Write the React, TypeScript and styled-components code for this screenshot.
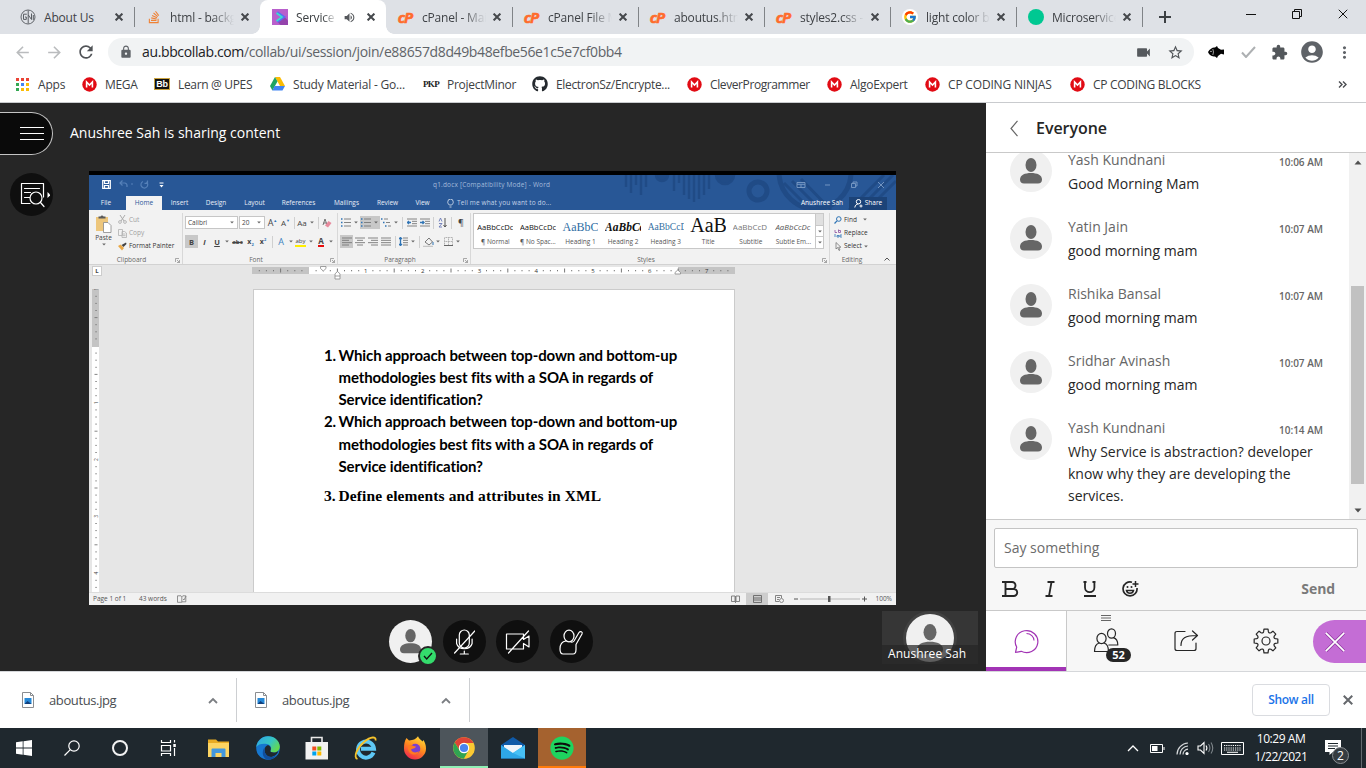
import React from "react";
import styled, { createGlobalStyle, css } from "styled-components";
import { FaGithub, FaSpotify, FaStackOverflow } from "react-icons/fa";
import { FcGoogle } from "react-icons/fc";
import {
  MdAccountCircle,
  MdArrowBack,
  MdArrowForward,
  MdExtension,
  MdLock,
  MdMoreVert,
  MdRefresh,
  MdStarBorder,
  MdVideocam,
  MdVolumeUp,
} from "react-icons/md";

const uiFont = `"Open Sans", "Noto Sans", sans-serif`;

const GlobalStyle = createGlobalStyle`
  * { box-sizing: border-box; }
  html, body { margin: 0; padding: 0; overflow: hidden; }
  body { font-family: ${uiFont}; background: #fff; }
  svg { display: block; flex: none; }
`;

const Screen = styled.div`
  width: 1366px;
  height: 768px;
  display: flex;
  flex-direction: column;
  overflow: hidden;
`;

type SvgProps = { w: number; h: number; vb?: string; children: React.ReactNode };
const Svg = ({ w, h, vb, children }: SvgProps) => (
  <svg width={w} height={h} viewBox={vb ?? `0 0 ${w} ${h}`} fill="none">
    {children}
  </svg>
);

/* ---------- Browser tabs ---------- */

const TabStrip = styled.div`
  height: 34px;
  flex: none;
  background: #dee1e6;
  display: flex;
  padding-left: 8px;
`;

const Tab = styled.div<{ $active?: boolean; $divider?: boolean }>`
  position: relative;
  width: 126px;
  height: 34px;
  padding: 0 7px 0 12px;
  display: flex;
  align-items: center;
  background: ${(p) => (p.$active ? "#fff" : "transparent")};
  border-radius: ${(p) => (p.$active ? "8px 8px 0 0" : "0")};
  ${(p) =>
    p.$active &&
    css`
      &::before,
      &::after {
        content: "";
        position: absolute;
        bottom: 0;
        width: 8px;
        height: 8px;
      }
      &::before {
        left: -8px;
        background: radial-gradient(circle at 0 0, transparent 7.5px, #fff 8px);
      }
      &::after {
        right: -8px;
        background: radial-gradient(circle at 100% 0, transparent 7.5px, #fff 8px);
      }
    `}
  ${(p) =>
    p.$divider &&
    css`
      &::after {
        content: "";
        position: absolute;
        right: -1px;
        top: 7px;
        width: 1px;
        height: 20px;
        background: #808387;
      }
    `}
`;

const Favicon = styled.span`
  width: 16px;
  height: 16px;
  margin-right: 8px;
  flex: none;
  display: flex;
  align-items: center;
  justify-content: center;
`;

const TabTitle = styled.span<{ $w: number; $fade: boolean; $active?: boolean }>`
  width: ${(p) => p.$w}px;
  flex: none;
  overflow: hidden;
  white-space: nowrap;
  font-size: 12px;
  letter-spacing: -0.2px;
  color: ${(p) => (p.$active ? "#3c4043" : "#3f4246")};
  ${(p) => p.$fade && "mask-image: linear-gradient(90deg, #000 65%, transparent);"}
`;

const AudioMark = styled.span`
  margin-left: 6px;
`;

const TabClose = styled.span`
  margin-left: auto;
  width: 12px;
`;

const NewTab = styled.div`
  width: 46px;
  display: flex;
  align-items: center;
  justify-content: center;
`;

const WindowButtons = styled.div`
  margin-left: auto;
  display: flex;
  height: 28px;
  align-items: center;
`;

const WindowButton = styled.span`
  width: 46px;
  display: flex;
  justify-content: center;
`;

const CloseX = ({ size = 8, color = "#45484c", sw = 2 }) => (
  <Svg w={size} h={size} vb="0 0 8 8">
    <path d="M.6.6l6.8 6.8M7.4.6L.6 7.4" stroke={color} strokeWidth={(sw * 8) / size} />
  </Svg>
);

const GmIcon = () => (
  <Svg w={16} h={16}>
    <circle cx="8" cy="8" r="7" stroke="#63676c" strokeWidth="1" />
    <path d="M6.800 5.200H3.500v5.200h2.800V8H5M8.200 1.500v13M8.300 6l3.200 4.500V4.500M13.300 6v5" stroke="#5a5e63" strokeWidth="1" />
  </Svg>
);

const CollabIcon = () => (
  <Svg w={16} h={16}>
    <rect width="16" height="16" fill="#b85fcc" />
    <path d="M6 13.500L12.500 8 16 11.500V16H8.500z" fill="#9443ac" />
    <path d="M5 3.500L11.500 8 5 12.500" stroke="#5a6ff0" strokeWidth="3" />
    <path d="M4.500 4L10 8l-5.500 4" stroke="#3be0cf" strokeWidth="1.600" />
  </Svg>
);

const CpMark = styled.span`
  font: italic 700 15px/16px "Noto Sans", "Liberation Sans", sans-serif;
  letter-spacing: -1px;
  color: #ff6c2c;
  -webkit-text-stroke: 0.6px #ff6c2c;
  padding: 0 2px 1px 0;
`;

const CpanelIcon = () => <CpMark>cP</CpMark>;
const TealDot = () => (
  <Svg w={16} h={16}>
    <circle cx="8" cy="8" r="8" fill="#00c892" />
  </Svg>
);
const GoogleIcon = () => (
  <Svg w={16} h={16}>
    <circle cx="8" cy="8" r="8" fill="#fff" />
    <FcGoogle size={14} x={1} y={1} />
  </Svg>
);

const tabs = [
  { title: "About Us", icon: <GmIcon />, divider: true },
  { title: "html - backgr", icon: <FaStackOverflow size={14} color="#ef8236" />, fade: true },
  { title: "Service", icon: <CollabIcon />, active: true, audio: true, fade: true },
  { title: "cPanel - Main", icon: <CpanelIcon />, divider: true, fade: true },
  { title: "cPanel File M", icon: <CpanelIcon />, divider: true, fade: true },
  { title: "aboutus.html", icon: <CpanelIcon />, divider: true, fade: true },
  { title: "styles2.css -", icon: <CpanelIcon />, divider: true, fade: true },
  { title: "light color ba", icon: <GoogleIcon />, divider: true, fade: true },
  { title: "Microservice", icon: <TealDot />, divider: true, fade: true },
];

const BrowserTabs = () => (
  <TabStrip>
    {tabs.map((t, i) => (
      <Tab key={i} $active={t.active} $divider={t.divider}>
        <Favicon>{t.icon}</Favicon>
        <TabTitle $w={t.audio ? 41 : 64} $fade={!!t.fade} $active={t.active}>
          {t.title}
        </TabTitle>
        {t.audio && (
          <AudioMark>
            <MdVolumeUp size={13} color="#55585c" />
          </AudioMark>
        )}
        <TabClose>
          <CloseX />
        </TabClose>
      </Tab>
    ))}
    <NewTab>
      <Svg w={12} h={12}>
        <path d="M6 0v12M0 6h12" stroke="#3c4043" strokeWidth="2" />
      </Svg>
    </NewTab>
    <WindowButtons>
      <WindowButton>
        <Svg w={10} h={10}>
          <path d="M0 5.500h10" stroke="#111" />
        </Svg>
      </WindowButton>
      <WindowButton>
        <Svg w={10} h={10}>
          <path d="M.5 2.500h7v7h-7zM2.500 2.500v-2h7v7h-2" stroke="#111" />
        </Svg>
      </WindowButton>
      <WindowButton>
        <CloseX size={10} color="#111" sw={1} />
      </WindowButton>
    </WindowButtons>
  </TabStrip>
);

/* ---------- Address bar ---------- */

const Toolbar = styled.div`
  height: 34px;
  flex: none;
  display: flex;
  align-items: center;
  padding: 2px 0 0 6px;
`;

const NavButton = styled.span<{ $w?: number }>`
  width: ${(p) => p.$w ?? 32}px;
  display: flex;
  justify-content: center;
  flex: none;
`;

const Omnibox = styled.div`
  width: 1086px;
  height: 28px;
  margin-left: 6px;
  border-radius: 14px;
  background: #f1f3f4;
  display: flex;
  align-items: center;
  padding: 0 10px 0 11px;
`;

const Url = styled.span`
  margin: -2px auto 0 9px;
  font-size: 14px;
  letter-spacing: -0.37px;
  color: #5f6368;
  b {
    font-weight: 400;
    color: #202124;
  }
`;

const StarSlot = styled.span`
  margin-left: 15px;
`;

const AddressBar = () => (
  <Toolbar>
    <NavButton>
      <MdArrowBack size={19} color="#babcbe" />
    </NavButton>
    <NavButton>
      <MdArrowForward size={19} color="#babcbe" />
    </NavButton>
    <NavButton>
      <MdRefresh size={20} color="#505357" />
    </NavButton>
    <Omnibox>
      <MdLock size={14} color="#5f6368" />
      <Url>
        <b>au.bbcollab.com</b>/collab/ui/session/join/e88657d8d49b48efbe56e1c5e7cf0bb4
      </Url>
      <MdVideocam size={17} color="#55595d" />
      <StarSlot>
        <MdStarBorder size={17} color="#505458" />
      </StarSlot>
    </Omnibox>
    <NavButton $w={44}>
      <Svg w={16} h={12}>
        <path d="M0 6C2 2.500 5 1 7 1.500L9 0l1 2 3 1.800L16 3.500v5l-3-.8L10 10l-1 2-2-1.500C4 10.500 1.500 9.500 0 6z" fill="#050505" />
        <path d="M4.800 3q1.400 3 0 6" stroke="#ddd" strokeWidth=".7" />
        <circle cx="3" cy="5.400" r=".6" fill="#fff" />
      </Svg>
    </NavButton>
    <NavButton $w={20}>
      <Svg w={15} h={12}>
        <path d="M1 6.500L5 11 14 1" stroke="#adb0b2" strokeWidth="2" />
      </Svg>
    </NavButton>
    <NavButton $w={43}>
      <MdExtension size={17} color="#53575b" />
    </NavButton>
    <NavButton $w={21}>
      <MdAccountCircle size={26} color="#5f6368" />
    </NavButton>
    <NavButton $w={44}>
      <MdMoreVert size={19} color="#5f6368" />
    </NavButton>
  </Toolbar>
);

/* ---------- Bookmarks ---------- */

const BookmarkBar = styled.div`
  height: 35px;
  flex: none;
  display: flex;
  align-items: center;
  padding: 0 19px 2px 14px;
  border-bottom: 1px solid #c9cbce;
`;

const Bookmark = styled.span<{ $w: number; $ls?: number }>`
  width: ${(p) => p.$w}px;
  flex: none;
  display: flex;
  align-items: center;
  white-space: nowrap;
  font-size: 12px;
  line-height: 15px;
  letter-spacing: ${(p) => p.$ls ?? -0.2}px;
  color: #3c4043;
`;

const Overflow = styled.span`
  margin-left: auto;
`;

const PkpText = styled.span`
  font: 700 9px "Liberation Serif", serif;
  letter-spacing: -0.6px;
  color: #222;
`;

const BbTile = styled.span`
  width: 16px;
  height: 12px;
  background: #111;
  border: 1px solid #c9a23e;
  color: #fff;
  font: 700 9px/10px "Liberation Sans", sans-serif;
  letter-spacing: -0.3px;
  display: flex;
  justify-content: center;
`;

const MegaIcon = () => (
  <Svg w={15} h={15}>
    <circle cx="7.500" cy="7.500" r="7.200" fill="#e10b14" />
    <path d="M4.600 10.600V5l2.900 3 2.900-3v5.600" stroke="#fff" strokeWidth="1.600" />
  </Svg>
);

const AppsIcon = () => {
  const colors = ["#ea4335", "#ea4335", "#ea4335", "#34a853", "#4285f4", "#fbbc05", "#34a853", "#fbbc05", "#fbbc05"];
  return (
    <Svg w={13} h={13}>
      {colors.map((c, i) => (
        <rect key={i} x={(i % 3) * 5} y={Math.floor(i / 3) * 5} width="3" height="3" fill={c} />
      ))}
    </Svg>
  );
};

const DriveIcon = () => (
  <Svg w={15} h={14}>
    <path d="M5 0h5l5 9h-5z" fill="#fbbc05" />
    <path d="M5 0l2.500 4.400L2.400 13.500 0 9z" fill="#1fa463" />
    <path d="M4.600 9H15l-2.500 4.500H2.300z" fill="#4285f4" />
  </Svg>
);

const bookmarks = [
  { label: "Apps", icon: <AppsIcon />, w: 67 },
  { label: "MEGA", icon: <MegaIcon />, w: 73, ls: -0.35 },
  { label: "Learn @ UPES", icon: <BbTile>Bb</BbTile>, w: 115, ls: -0.33 },
  { label: "Study Material - Go...", icon: <DriveIcon />, w: 154 },
  { label: "ProjectMinor", icon: <PkpText>PKP</PkpText>, w: 109, ls: -0.27 },
  { label: "ElectronSz/Encrypte...", icon: <FaGithub size={16} color="#24292e" />, w: 154, ls: -0.33 },
  { label: "CleverProgrammer", icon: <MegaIcon />, w: 140, ls: -0.4 },
  { label: "AlgoExpert", icon: <MegaIcon />, w: 98, ls: -0.3 },
  { label: "CP CODING NINJAS", icon: <MegaIcon />, w: 145, ls: -0.18 },
  { label: "CP CODING BLOCKS", icon: <MegaIcon />, w: 140, ls: -0.3 },
];

const Bookmarks = () => (
  <BookmarkBar>
    {bookmarks.map((b) => (
      <Bookmark key={b.label} $w={b.w} $ls={b.ls}>
        <Favicon>{b.icon}</Favicon>
        {b.label}
      </Bookmark>
    ))}
    <Overflow>
      <Svg w={9} h={7}>
        <path d="M1 .5l3 3-3 3M5 .5l3 3-3 3" stroke="#4a4d51" strokeWidth="1.400" />
      </Svg>
    </Overflow>
  </BookmarkBar>
);

/* ---------- Session stage ---------- */

const Session = styled.div`
  height: 569px;
  flex: none;
  display: flex;
  border-bottom: 1px solid #d5d7da;
`;

const Stage = styled.div`
  width: 986px;
  background: #262626;
  display: grid;
  grid-template: 68px 434px 66px / 89px 807px 90px;
`;

const StageHeader = styled.div`
  grid-column: 1 / -1;
  display: flex;
  align-items: flex-start;
  color: #fff;
  font-size: 14px;
  line-height: 20px;
`;

const MenuPill = styled.div`
  width: 53px;
  height: 43px;
  margin: 9px 17px 0 0;
  padding: 0 8px 1px 0;
  background: #0a0a0a;
  border: 1px solid #c4c4c4;
  border-left: 0;
  border-radius: 0 22px 22px 0;
  display: flex;
  align-items: center;
  justify-content: flex-end;
`;

const StageTitle = styled.span`
  margin-top: 20px;
`;

const SideTools = styled.div`
  padding: 2px 0 0 10px;
`;

const RoundButton = styled.div<{ $light?: boolean }>`
  position: relative;
  width: 43px;
  height: 43px;
  border-radius: 50%;
  background: ${(p) => (p.$light ? "#f0f0f0" : "#0f0f0f")};
  display: flex;
  align-items: center;
  justify-content: center;
`;

const StageControls = styled.div`
  grid-column: 1 / -1;
  display: flex;
  padding: 6px 8px 0 389px;
`;

const ControlGroup = styled.div`
  display: flex;
  gap: 10.6px;
  padding-top: 9px;
`;

const StatusBadge = styled.span`
  position: absolute;
  right: -6px;
  bottom: -3px;
  width: 20px;
  height: 20px;
  border-radius: 50%;
  border: 2px solid #262626;
  background: #34db6c;
  display: flex;
  align-items: center;
  justify-content: center;
`;

const PresenterTile = styled.div`
  position: relative;
  width: 96px;
  height: 53px;
  margin-left: auto;
  background: #363636;
  display: flex;
  justify-content: center;
  padding-top: 3px;
`;

const PresenterAvatar = styled.div`
  width: 48px;
  height: 48px;
  border-radius: 50%;
  overflow: hidden;
  background: #f0f0f0;
  box-shadow: 0 0 0 3px #414141;
  clip-path: inset(-3px -3px 0 -3px);
  display: flex;
  justify-content: center;
  padding-top: 10px;
`;

const PresenterName = styled.div`
  position: absolute;
  inset: auto 0 0 0;
  height: 19px;
  padding-left: 6px;
  background: rgba(38, 38, 38, 0.72);
  color: #fff;
  font-size: 12px;
  letter-spacing: 0.05px;
  line-height: 18px;
  white-space: nowrap;
`;

const Person = ({ w = 22 }: { w?: number }) => (
  <Svg w={w} h={(w * 26) / 22} vb="0 0 22 26">
    <ellipse cx="11" cy="7" rx="5.500" ry="7" fill="#666" />
    <path d="M0 21.500C0 17 5 15 11 15s11 2 11 6.500c0 2.500-1.500 4-4 4H4c-2.500 0-4-1.500-4-4z" fill="#666" />
  </Svg>
);

const line = { stroke: "#fff", strokeWidth: 1.2, strokeLinecap: "round", strokeLinejoin: "round" } as const;

const MicOff = () => (
  <Svg w={22} h={26} vb="-.800 0 22 26">
    <rect x="5.500" y="1" width="10" height="18" rx="5" {...line} />
    <path d="M2.800 10v4.500a8 7 0 0 0 15.500 0V10M10.500 22v3M6.500 25h8M.8 24L21 2" {...line} />
  </Svg>
);

const CameraOff = () => (
  <Svg w={26} h={26} vb="-.500 0 26 26">
    <path d="M1 5h17v5.500l5.500-3.500v11L18 14.500V20H1zM3 24L23 2" {...line} />
  </Svg>
);

const RaiseHand = () => (
  <Svg w={26} h={26}>
    <ellipse cx="11" cy="7" rx="5" ry="5.800" {...line} />
    <path d="M8 12c-4 .5-6 4-6 8 0 3 1 5 3 5h10c2 0 3-1.500 3-4.500v-5l6-10.500c1-2-1.600-3.500-3-1.500L16 12c-.8 1-2 1.200-3 1" {...line} />
  </Svg>
);

/* ---------- Shared Word window ---------- */

const WordWindow = styled.div`
  border-top: 4px solid #000;
  background: #e6e6e6;
  display: flex;
  flex-direction: column;
  font-family: "Open Sans", "Noto Sans", sans-serif;
  font-size: 6.5px;
  line-height: 8px;
  color: #444;
  overflow: hidden;
  white-space: nowrap;
`;

const WordTop = styled.div`
  position: relative;
  height: 35px;
  flex: none;
  background: #285796;
  color: #e8eef6;
`;

const TopPattern = styled.div`
  position: absolute;
  right: 0;
  top: 0;
`;

const WordTitleRow = styled.div`
  position: relative;
  height: 21px;
  display: flex;
  align-items: center;
  padding: 0 0 2px 10px;
`;

const WordTabsRow = styled.div`
  position: relative;
  height: 14px;
  display: flex;
  align-items: center;
`;

const WordTab = styled.span<{ $w: number; $active?: boolean }>`
  width: ${(p) => p.$w}px;
  height: 14px;
  line-height: 14px;
  flex: none;
  text-align: center;
  ${(p) => p.$active && "background: #f3f3f3; color: #2b579a; font-weight: 500;"}
  &:first-of-type {
    padding-right: 3px;
  }
`;

const DocTitle = styled.span`
  width: 118px;
  margin-left: 269px;
  color: #a3bbdb;
  letter-spacing: 0.18px;
`;

const TellMe = styled.span`
  letter-spacing: 0.12px;
  color: #c3d2e8;
`;

const Gap = styled.span<{ $w: number }>`
  width: ${(p) => p.$w}px;
  flex: none;
`;

const Slot = styled.span<{ $w: number; $on?: boolean }>`
  width: ${(p) => p.$w}px;
  height: 13px;
  flex: none;
  display: inline-flex;
  align-items: center;
  justify-content: center;
  background: ${(p) => (p.$on ? "#c8c8c8" : "transparent")};
`;

const ShareButton = styled.span`
  width: 38px;
  height: 13px;
  margin-left: 4px;
  background: #1c4378;
  color: #fff;
  display: flex;
  align-items: center;
  justify-content: center;
  gap: 2px;
`;

const PresenterLabel = styled.span`
  width: 44px;
  margin-left: auto;
  color: #fff;
`;

const TopRightPad = styled.span`
  width: 9px;
`;

const Ribbon = styled.div`
  height: 55px;
  flex: none;
  background: #f2f2f2;
  border-bottom: 1px solid #d2d2d2;
  display: flex;
`;

const Group = styled.div<{ $w: number; $last?: boolean }>`
  position: relative;
  width: ${(p) => p.$w}px;
  height: 51px;
  margin-top: 3px;
  padding-left: ${(p) => (p.$last ? 4 : 2)}px;
  flex: none;
  display: flex;
  flex-direction: column;
  border-right: ${(p) => (p.$last ? "0" : "1px solid #d8d8d8")};
`;

const GroupLabel = styled.div`
  margin-top: auto;
  height: 8px;
  display: flex;
  justify-content: center;
  color: #666;
  padding-right: 10px;
`;

const Launcher = styled.span`
  position: absolute;
  right: 2px;
  bottom: 1px;
`;

const RibbonRow = styled.div`
  display: flex;
  align-items: center;
  height: 19px;
`;

const Combo = styled.span<{ $w: number }>`
  width: ${(p) => p.$w}px;
  height: 13px;
  margin-right: 1px;
  padding: 0 3px 0 2px;
  background: #fff;
  border: 1px solid #c6c6c6;
  display: flex;
  align-items: center;
  justify-content: space-between;
`;

const Divider = styled.span<{ $w: number }>`
  width: ${(p) => p.$w}px;
  display: flex;
  justify-content: center;
  &::before {
    content: "";
    width: 1px;
    height: 12px;
    background: #d0d0d0;
  }
`;

const ClipboardBody = styled.div`
  display: flex;
`;

const PasteButton = styled.div`
  width: 25px;
  display: flex;
  flex-direction: column;
  align-items: center;
  gap: 1px;
  padding-top: 2px;
`;

const ClipboardList = styled.div`
  padding: 0 0 0 2px;
  display: flex;
  flex-direction: column;
`;

const MiniCommand = styled.span<{ $dim?: boolean }>`
  height: 13.6px;
  margin-top: -0.2px;
  display: flex;
  align-items: center;
  gap: 2px;
  color: ${(p) => (p.$dim ? "#a0a0a0" : "#333")};
`;

const Gallery = styled.div`
  width: 351px;
  height: 36px;
  background: #fff;
  border: 1px solid #c8c8c8;
  display: flex;
`;

const StyleCard = styled.div`
  width: 42.6px;
  padding: 0 2px;
  display: flex;
  flex-direction: column;
  align-items: center;
  color: #555;
`;

const StyleSample = styled.span<{ $size: number; $color: string; $serif?: boolean; $bold?: boolean; $italic?: boolean }>`
  height: 24px;
  width: 36px;
  overflow: hidden;
  line-height: ${(p) => (p.$size > 15 ? 23 : 26)}px;
  text-align: left;
  font-size: ${(p) => p.$size}px;
  color: ${(p) => p.$color};
  font-family: ${(p) => (p.$serif ? `"Liberation Serif", serif` : `"Open Sans", sans-serif`)};
  font-weight: ${(p) => (p.$bold ? 700 : 400)};
  font-style: ${(p) => (p.$italic ? "italic" : "normal")};
`;

const GalleryScroll = styled.div`
  margin-left: auto;
  width: 8px;
  border-left: 1px solid #c8c8c8;
  display: flex;
  flex-direction: column;
  & > span {
    flex: 1;
    display: flex;
    align-items: center;
    justify-content: center;
    border-bottom: 1px solid #c8c8c8;
  }
  & > span:first-child {
    background: #e0e0e0;
  }
  & > span:last-child {
    border-bottom: 0;
  }
`;

const CollapseSlot = styled.span`
  margin: auto 6px 3px auto;
`;

const RulerRow = styled.div`
  height: 24px;
  flex: none;
  display: flex;
  padding: 1px 0 0 3px;
`;

const DocArea = styled.div`
  height: 303px;
  flex: none;
  display: flex;
  padding-left: 3px;
`;

const Page = styled.div`
  width: 482px;
  margin-left: 154px;
  padding: 54px 40px 0 70px;
  background: #fff;
  border: 1px solid #cbcbcb;
  border-bottom: 0;
`;

const Question = styled.div<{ $serif?: boolean }>`
  display: flex;
  margin-top: ${(p) => (p.$serif ? 8 : 0)}px;
  font-family: ${(p) => (p.$serif ? `"Liberation Serif", serif` : `Lato, sans-serif`)};
  font-size: ${(p) => (p.$serif ? 15.5 : 15)}px;
  font-weight: 700;
  line-height: 22.15px;
  color: #000;
  letter-spacing: ${(p) => (p.$serif ? 0.11 : -0.13)}px;
`;

const QuestionNumber = styled.span`
  width: 14.5px;
  flex: none;
`;

const StatusBar = styled.div`
  height: 13px;
  flex: none;
  background: #f1f1f1;
  border-top: 1px solid #dcdcdc;
  display: flex;
  align-items: center;
  padding-left: 4px;
  color: #555;
`;

const Caret = () => (
  <Svg w={4} h={3}>
    <path d="M.2.500h3.600L2 2.500z" fill="#666" />
  </Svg>
);

const LauncherIcon = () => (
  <Svg w={5} h={5}>
    <path d="M.5 4V.5H4M2 2l2.500 2.500M4.500 2v2.500H2" stroke="#888" strokeWidth=".7" />
  </Svg>
);

const WordPattern = () => (
  <Svg w={272} h={35}>
    <g stroke="#204b86" strokeWidth="2.500">
      <path d="M2 0v12M7 0v18M12 0v10M17 0v20M22 0v12M50 0v16M55 0v8M60 0v20M65 0v24M70 0v27M75 0v24M80 0v20M85 0v14" />
      <path d="M160 8l27 27M168 6l29 29M177 4l30 31" strokeWidth="3" />
      <path d="M225 35L260 0M234 35L269 0M243 35l29-29" strokeWidth="3" />
      <circle cx="134" cy="16" r="9" strokeWidth="5" />
      <path d="M155 0c2 20 18 34 36 34s34-14 36-34" strokeWidth="5" />
      <path d="M32 0a6 6 0 0 0 12 0" fill="#204b86" />
      <path d="M92 0a9 9 0 0 0 18 0" fill="#204b86" />
    </g>
  </Svg>
);

const Lines = ({ rows, marks }: { rows: number[][]; marks?: string }) => (
  <Svg w={10} h={9}>
    {rows.map(([a, b], i) => (
      <path key={i} d={`M${a} ${1 + (i * 7) / (rows.length - 1)}H${b}`} stroke="#777" strokeWidth=".9" />
    ))}
    {marks && <path d={marks} stroke="#2f74b5" strokeWidth="1.300" />}
  </Svg>
);

const bulletMarks = "M0 1h1.500M0 4.500h1.500M0 8h1.500";
const full = [[0, 10], [0, 7], [0, 10], [0, 7]];

const styleCards = [
  { sample: "AaBbCcDc", label: "¶ Normal", size: 7.6, color: "#111" },
  { sample: "AaBbCcDc", label: "¶ No Spac...", size: 7.6, color: "#111" },
  { sample: "AaBbC", label: "Heading 1", size: 12, color: "#2e6da4", serif: true },
  { sample: "AaBbCc", label: "Heading 2", size: 11.5, color: "#111", bold: true, italic: true, serif: true },
  { sample: "AaBbCcD", label: "Heading 3", size: 9.5, color: "#336f9f", serif: true },
  { sample: "AaB", label: "Title", size: 20, color: "#111", serif: true },
  { sample: "AaBbCcD", label: "Subtitle", size: 8, color: "#777" },
  { sample: "AaBbCcDc", label: "Subtle Em...", size: 7.8, color: "#555", italic: true },
];

const wordTabs: [string, number, boolean?][] = [
  ["File", 37],
  ["Home", 36, true],
  ["Insert", 35],
  ["Design", 38],
  ["Layout", 39],
  ["References", 49],
  ["Mailings", 47],
  ["Review", 35],
  ["View", 35],
];

const WordHeader = () => (
  <WordTop>
    <TopPattern>
      <WordPattern />
    </TopPattern>
    <WordTitleRow>
      <Gap $w={3} />
      <Svg w={9} h={9}>
        <path d="M.7.700h7.600v7.600H.7zM2.500.7v2.800h4V.7M2.500 8V5.500h4V8" stroke="#fff" strokeWidth="1.200" />
      </Svg>
      <Gap $w={8} />
      <Svg w={32} h={9}>
        <path
          d="M1 3h5q2.500.5 2 4M3.500.5L1 3l2.500 2.500M12 4h2M24 1.500a3.400 3.400 0 1 0 3.500.5M28.500.5v2.800h-3"
          stroke="#5580b8"
          strokeWidth="1.200"
        />
      </Svg>
      <Gap $w={8} />
      <Svg w={5} h={6}>
        <path d="M.5 1h4" stroke="#fff" />
        <path d="M.5 3h4L2.500 5.500z" fill="#fff" />
      </Svg>
      <DocTitle>q1.docx [Compatibility Mode] - Word</DocTitle>
      <Gap $w={245} />
      <Svg w={96} h={8}>
        <path
          d="M1 1.500h8v5H1zM1 3.300h8M5 3.500v3M29 4h5M55.500 2.500h4v4h-4zM57 2.500V1h4v4h-1.500M82 1l6 6M88 1l-6 6"
          stroke="#7c9cc6"
          strokeWidth=".9"
        />
      </Svg>
    </WordTitleRow>
    <WordTabsRow>
      {wordTabs.map(([label, w, active]) => (
        <WordTab key={label} $w={w} $active={active}>
          {label}
        </WordTab>
      ))}
      <Gap $w={7} />
      <Svg w={7} h={9}>
        <path d="M2.300 6C.8 4.500.6 3.500.8 2.800a2.700 2.700 0 0 1 5.400 0c.2.7 0 1.700-1.500 3.200zM2.500 8h2" stroke="#dfe8f4" strokeWidth=".8" />
      </Svg>
      <Gap $w={3} />
      <TellMe>Tell me what you want to do...</TellMe>
      <PresenterLabel>Anushree Sah</PresenterLabel>
      <ShareButton>
        <Svg w={9} h={9}>
          <circle cx="4.500" cy="2.700" r="2.200" stroke="#fff" />
          <path d="M.8 8.500c.3-2.500 2-3.500 3.500-3.500M5.500 7h3M7 5.500v3" stroke="#fff" />
        </Svg>
        Share
      </ShareButton>
      <TopRightPad />
    </WordTabsRow>
  </WordTop>
);

const Letter = styled.span<{ $size?: number; $bold?: boolean; $italic?: boolean; $color?: string; $bar?: string; $strike?: boolean }>`
  font-size: ${(p) => p.$size ?? 8}px;
  line-height: 8px;
  font-weight: ${(p) => (p.$bold ? 700 : 400)};
  font-style: ${(p) => (p.$italic ? "italic" : "normal")};
  color: ${(p) => p.$color ?? "#444"};
  text-decoration: ${(p) => (p.$strike ? "line-through" : "none")};
  ${(p) => p.$bar && `border-bottom: 2px solid ${p.$bar};`}
  sub, sup {
    font-size: 4px;
    line-height: 0;
    color: #2f74b5;
  }
`;

const UnderlinedLetter = styled(Letter)`
  text-decoration: underline;
`;

const ClipboardGroup = () => (
  <Group $w={94}>
    <ClipboardBody>
      <PasteButton>
        <Svg w={17} h={18}>
          <rect x="1" y="2" width="12" height="14" fill="#edc67c" />
          <path d="M3.500 3.500V1.500h2a1.600 1.500 0 0 1 3 0h2v2z" fill="#5a5a5a" />
          <path d="M8.500 7.500h4.500l3 3v7H8.500z" fill="#fff" stroke="#888" strokeWidth=".8" />
        </Svg>
        <span>Paste</span>
        <Caret />
      </PasteButton>
      <ClipboardList>
        <MiniCommand $dim>
          <Svg w={9} h={9}>
            <path d="M2 0l4 6M7 0L3 6" stroke="#aaa" />
            <circle cx="2" cy="7" r="1.400" stroke="#aaa" strokeWidth=".8" />
            <circle cx="7" cy="7" r="1.400" stroke="#aaa" strokeWidth=".8" />
          </Svg>
          Cut
        </MiniCommand>
        <MiniCommand $dim>
          <Svg w={9} h={9}>
            <path d="M.5.500h4v6h-4zM4 2.500h2.500L8.500 4v4.500H4zM5 5h2.500M5 6.700h2.500" stroke="#b0b0b0" strokeWidth=".8" />
          </Svg>
          Copy
        </MiniCommand>
        <MiniCommand>
          <Svg w={9} h={9}>
            <path d="M0 4l2.500-1.500L6 6 4 8.500z" fill="#e9a846" />
            <path d="M3.500 3L8 .5 8.500 2 5.500 5z" fill="#444" />
          </Svg>
          Format Painter
        </MiniCommand>
      </ClipboardList>
    </ClipboardBody>
    <GroupLabel>Clipboard</GroupLabel>
    <Launcher>
      <LauncherIcon />
    </Launcher>
  </Group>
);

const FontGroup = () => (
  <Group $w={155}>
    <RibbonRow>
      <Combo $w={53}>
        Calibri <Caret />
      </Combo>
      <Combo $w={26}>
        20 <Caret />
      </Combo>
      <Slot $w={13}>
        <Letter $size={9}>A<sup>▲</sup></Letter>
      </Slot>
      <Slot $w={13}>
        <Letter $size={8}>A<sup>▼</sup></Letter>
      </Slot>
      <Divider $w={4} />
      <Slot $w={12}>
        <Letter>Aa</Letter>
      </Slot>
      <Slot $w={8}>
        <Caret />
      </Slot>
      <Divider $w={4} />
      <Slot $w={13}>
        <Svg w={10} h={10}>
          <path d="M1 7l2-6 2 6M1.500 5h3" stroke="#666" strokeWidth=".9" />
          <path d="M3 7.500L6.500 3 9.500 5 6 9.500z" fill="#e78a9d" />
        </Svg>
      </Slot>
    </RibbonRow>
    <RibbonRow>
      <Slot $w={13} $on>
        <Letter $size={7.5} $bold>B</Letter>
      </Slot>
      <Slot $w={13}>
        <Letter $size={7.5} $italic $bold>I</Letter>
      </Slot>
      <Slot $w={12}>
        <UnderlinedLetter $size={7.5} $bold>U</UnderlinedLetter>
      </Slot>
      <Slot $w={8}>
        <Caret />
      </Slot>
      <Slot $w={13}>
        <Letter $size={6} $bold $strike>abc</Letter>
      </Slot>
      <Slot $w={13}>
        <Letter $size={7} $bold>x<sub>2</sub></Letter>
      </Slot>
      <Slot $w={12}>
        <Letter $size={7} $bold>x<sup>2</sup></Letter>
      </Slot>
      <Divider $w={6} />
      <Slot $w={12}>
        <Letter $size={9} $color="#3d82c0">A</Letter>
      </Slot>
      <Slot $w={7}>
        <Caret />
      </Slot>
      <Slot $w={13}>
        <Letter $size={6} $bar="#ffee00">aby</Letter>
      </Slot>
      <Slot $w={8}>
        <Caret />
      </Slot>
      <Slot $w={12}>
        <Letter $size={8} $bold $bar="#e80d0d">A</Letter>
      </Slot>
      <Slot $w={8}>
        <Caret />
      </Slot>
    </RibbonRow>
    <GroupLabel>Font</GroupLabel>
    <Launcher>
      <LauncherIcon />
    </Launcher>
  </Group>
);

const ParagraphGroup = () => (
  <Group $w={133}>
    <RibbonRow>
      <Slot $w={12}>
        <Lines rows={[[3, 10], [3, 10], [3, 10]]} marks={bulletMarks} />
      </Slot>
      <Slot $w={8}>
        <Caret />
      </Slot>
      <Slot $w={12} $on>
        <Lines rows={[[3, 10], [3, 10], [3, 10]]} marks={bulletMarks} />
      </Slot>
      <Slot $w={8} $on>
        <Caret />
      </Slot>
      <Slot $w={12}>
        <Lines rows={[[3, 7], [5, 9], [7, 10]]} marks="M0 1h1.500M2 4.500h1.500M4 8h1.500" />
      </Slot>
      <Slot $w={7}>
        <Caret />
      </Slot>
      <Divider $w={6} />
      <Slot $w={13}>
        <Lines rows={[[0, 10], [5, 10], [5, 10], [0, 10]]} marks="M0 4.500h4M2 3L.5 4.500 2 6" />
      </Slot>
      <Slot $w={13}>
        <Lines rows={[[0, 10], [5, 10], [5, 10], [0, 10]]} marks="M0 4.500h4M2.500 3L4 4.500 2.500 6" />
      </Slot>
      <Divider $w={5} />
      <Slot $w={13}>
        <Svg w={9} h={11}>
          <path d="M1 4.500L2.500 1 4 4.500M1 6.500h3l-3 3.500h3" stroke="#6a79b8" strokeWidth=".9" />
          <path d="M7 1v9M5.500 8L7 10l1.500-2" stroke="#555" />
        </Svg>
      </Slot>
      <Divider $w={5} />
      <Slot $w={14}>
        <Letter $size={9}>¶</Letter>
      </Slot>
    </RibbonRow>
    <RibbonRow>
      <Slot $w={13} $on>
        <Lines rows={full} />
      </Slot>
      <Slot $w={13}>
        <Lines rows={[[0, 10], [2, 8], [0, 10], [2, 8]]} />
      </Slot>
      <Slot $w={13}>
        <Lines rows={[[0, 10], [3, 10], [0, 10], [3, 10]]} />
      </Slot>
      <Slot $w={13}>
        <Lines rows={[[0, 10], [0, 10], [0, 10], [0, 10]]} />
      </Slot>
      <Divider $w={6} />
      <Slot $w={11}>
        <Lines rows={[[4, 9], [4, 9], [4, 9], [4, 9]]} marks="M1.500.5v8M0 2L1.500.5 3 2M0 7l1.500 1.500L3 7" />
      </Slot>
      <Slot $w={7}>
        <Caret />
      </Slot>
      <Divider $w={6} />
      <Slot $w={12}>
        <Svg w={11} h={10}>
          <path d="M2 5l4-4 3.500 4L6 8z" stroke="#777" />
          <path d="M10 5v3" stroke="#2f74b5" />
          <path d="M0 9.300h10" stroke="#bbb" />
        </Svg>
      </Slot>
      <Slot $w={8}>
        <Caret />
      </Slot>
      <Slot $w={12}>
        <Svg w={9} h={9}>
          <path d="M.5.500h8v8h-8zM4.500.5v8M.5 4.500h8" stroke="#999" strokeWidth=".8" strokeDasharray="1 .6" />
          <path d="M0 8.500h9" stroke="#666" />
        </Svg>
      </Slot>
      <Slot $w={8}>
        <Caret />
      </Slot>
    </RibbonRow>
    <GroupLabel>Paragraph</GroupLabel>
    <Launcher>
      <LauncherIcon />
    </Launcher>
  </Group>
);

const StylesGroup = () => (
  <Group $w={359}>
    <Gallery>
      {styleCards.map((s, i) => (
        <StyleCard key={i}>
          <StyleSample $size={s.size} $color={s.color} $bold={s.bold} $italic={s.italic} $serif={s.serif}>
            {s.sample}
          </StyleSample>
          <span>{s.label}</span>
        </StyleCard>
      ))}
      <GalleryScroll>
        <span />
        <span>
          <Caret />
        </span>
        <span>
          <Caret />
        </span>
      </GalleryScroll>
    </Gallery>
    <GroupLabel>Styles</GroupLabel>
    <Launcher>
      <LauncherIcon />
    </Launcher>
  </Group>
);

const EditingGroup = () => (
  <Group $w={50} $last>
    <MiniCommand>
      <Svg w={8} h={8}>
        <circle cx="4.800" cy="3" r="2.300" stroke="#2f74b5" />
        <path d="M3 4.800L.5 7.500" stroke="#2f74b5" strokeWidth="1.200" />
      </Svg>
      Find <Gap $w={2} />
      <Caret />
    </MiniCommand>
    <MiniCommand>
      <Svg w={8} h={9}>
        <path d="M1 1v2.500h2M4.500.5v3h2v-2h-2" stroke="#8a4fa0" strokeWidth=".8" />
        <path d="M1 5v3M3 6.500h2V8H3zM8 6H6v2h2" stroke="#2f74b5" strokeWidth=".8" />
      </Svg>
      Replace
    </MiniCommand>
    <MiniCommand>
      <Svg w={8} h={9}>
        <path d="M2 .5v6.500l1.600-1.500L5 8.500l1-.5-1.300-2.800h2.200z" stroke="#777" strokeWidth=".8" />
      </Svg>
      Select <Caret />
    </MiniCommand>
    <GroupLabel>Editing</GroupLabel>
  </Group>
);

const inch = 56.8;
const HorizontalRuler = () => {
  const ticks: React.ReactNode[] = [];
  for (let k = -7; k <= 59; k++) {
    const x = 57 + (k * inch) / 8;
    if (k % 8 === 0) {
      if (k > 0)
        ticks.push(
          <text key={k} x={x} y="7" fontSize="6" textAnchor="middle" fill="#333">
            {k / 8}
          </text>
        );
    } else
      ticks.push(<path key={k} d={k % 4 === 0 ? `M${x} 2.500v4` : `M${x} 4v1.300`} stroke="#777" strokeWidth="1" />);
  }
  return (
    <Svg w={483} h={14}>
      <rect y="1" width="483" height="7" fill="#c4c4c4" />
      <rect x="57" y="1" width="369" height="7" fill="#fff" />
      {ticks}
      <path d="M68.500.500h5.500v2L71.300 5 68.500 2.500zM83 13h5V7.800L85.500 5.500 83 7.800zM83 10h5M423 8h5.500V6.500L425.800 4 423 6.500z" fill="#fff" stroke="#888" strokeWidth=".8" />
    </Svg>
  );
};

const VerticalRuler = () => {
  const ticks: React.ReactNode[] = [];
  for (let k = -8; k <= 34; k++) {
    const y = 57 + (k * inch) / 8;
    if (k % 8 === 0 && k !== 0)
      ticks.push(
        <text key={k} transform={`translate(5.500 ${y}) rotate(-90)`} fontSize="5" textAnchor="middle" fill="#444">
          {Math.abs(k / 8)}
        </text>
      );
    else if (k !== 0)
      ticks.push(<path key={k} d={k % 4 === 0 ? `M2.500 ${y}h3` : `M3.300 ${y}h1.500`} stroke="#777" strokeWidth=".9" />);
  }
  return (
    <Svg w={7} h={303}>
      <rect width="7" height="58" fill="#c4c4c4" />
      <rect y="58" width="7" height="245" fill="#fff" />
      {ticks}
    </Svg>
  );
};

const TabStopBox = styled.span`
  width: 10px;
  height: 10px;
  margin-right: 150px;
  flex: none;
  background: #fff;
  border: 1px solid #ccc;
  font-size: 6px;
  font-weight: 700;
  text-align: center;
`;

const questions = [
  ["Which approach between top-down and bottom-up", "methodologies best fits with a SOA in regards of", "Service identification?"],
  ["Which approach between top-down and bottom-up", "methodologies best fits with a SOA in regards of", "Service identification?"],
];

const ViewSlot = styled.span<{ $on?: boolean }>`
  width: 22px;
  height: 12px;
  display: flex;
  align-items: center;
  justify-content: center;
  background: ${(p) => (p.$on ? "#cdcdcd" : "transparent")};
`;

const StatusText = styled.span<{ $w: number }>`
  width: ${(p) => p.$w}px;
`;

const StatusRight = styled.div`
  margin-left: auto;
  display: flex;
  align-items: center;
  padding-right: 4px;
`;

const SharedWord = () => (
  <WordWindow>
    <WordHeader />
    <Ribbon>
      <ClipboardGroup />
      <FontGroup />
      <ParagraphGroup />
      <StylesGroup />
      <EditingGroup />
      <CollapseSlot>
        <Svg w={6} h={4}>
          <path d="M.5 3.500L3 1l2.500 2.500" stroke="#555" />
        </Svg>
      </CollapseSlot>
    </Ribbon>
    <RulerRow>
      <TabStopBox>L</TabStopBox>
      <HorizontalRuler />
    </RulerRow>
    <DocArea>
      <VerticalRuler />
      <Page>
        {questions.map((lines, i) => (
          <Question key={i}>
            <QuestionNumber>{i + 1}.</QuestionNumber>
            <span>
              {lines.map((l) => (
                <div key={l}>{l}</div>
              ))}
            </span>
          </Question>
        ))}
        <Question $serif>
          <QuestionNumber>3.</QuestionNumber>
          <span>Define elements and attributes in XML</span>
        </Question>
      </Page>
    </DocArea>
    <StatusBar>
      <StatusText $w={46}>Page 1 of 1</StatusText>
      <StatusText $w={38}>43 words</StatusText>
      <Svg w={10} h={8}>
        <path d="M.5.800h3.500l.8 1v5.500H.5zM5 1.800l.8-1h3v6H5M6 4l1 1 2-4" stroke="#777" strokeWidth=".8" />
      </Svg>
      <StatusRight>
        <ViewSlot>
          <Svg w={9} h={8}>
            <path d="M.5 1h3.500v5.500H.5zM5 1h3.500v5.500H5zM4.500 1v7" stroke="#777" strokeWidth=".9" />
          </Svg>
        </ViewSlot>
        <ViewSlot $on>
          <Svg w={9} h={8}>
            <path d="M.5.500h8v7h-8zM1 3h7M1 5h7" stroke="#666" strokeWidth=".9" />
          </Svg>
        </ViewSlot>
        <ViewSlot>
          <Svg w={9} h={8}>
            <path d="M.5.500h6V3M.5.5v6H4M2 2.500h3M2 4.500h2" stroke="#777" strokeWidth=".9" />
            <circle cx="6.500" cy="5.500" r="2" stroke="#777" strokeWidth=".8" />
          </Svg>
        </ViewSlot>
        <Gap $w={4} />
        <Svg w={74} h={8}>
          <path d="M0 4h4M68 4h5M70.500 1.500v5" stroke="#555" strokeWidth="1" />
          <path d="M6 4h60" stroke="#aaa" strokeWidth=".8" />
          <rect x="34" y="1" width="2.500" height="6" fill="#555" />
        </Svg>
        <Gap $w={7} />
        100%
      </StatusRight>
    </StatusBar>
  </WordWindow>
);

const StageView = () => (
  <Stage>
    <StageHeader>
      <MenuPill>
        <Svg w={24} h={14}>
          <path d="M0 1.500h24M0 7.500h24M0 13.500h24" stroke="#fff" strokeWidth="1" />
        </Svg>
      </MenuPill>
      <StageTitle>Anushree Sah is sharing content</StageTitle>
    </StageHeader>
    <SideTools>
      <RoundButton>
        <Svg w={36} h={26}>
          <path d="M16 21.500H7.500v-20h22V15M10.500 6.500h15M10.500 10.500h6M10.500 15.500h5" {...line} />
          <circle cx="22" cy="16" r="6" {...line} />
          <path d="M26.500 20.500L30 24.500" {...line} />
          <path d="M33.500 10l3 3-3 3z" fill="#fff" />
        </Svg>
      </RoundButton>
    </SideTools>
    <SharedWord />
    <div />
    <StageControls>
      <ControlGroup>
        <RoundButton $light>
          <Person w={21} />
          <StatusBadge>
            <Svg w={10} h={8}>
              <path d="M1 4l2.700 3L9 1" stroke="#111" strokeWidth="1.300" />
            </Svg>
          </StatusBadge>
        </RoundButton>
        <RoundButton>
          <MicOff />
        </RoundButton>
        <RoundButton>
          <CameraOff />
        </RoundButton>
        <RoundButton>
          <RaiseHand />
        </RoundButton>
      </ControlGroup>
      <PresenterTile>
        <PresenterAvatar>
          <Person w={26} />
        </PresenterAvatar>
        <PresenterName>Anushree Sah</PresenterName>
      </PresenterTile>
    </StageControls>
  </Stage>
);

/* ---------- Chat panel ---------- */

const ChatPanel = styled.aside`
  width: 380px;
  background: #fff;
  display: flex;
  flex-direction: column;
`;

const ChatHeader = styled.div`
  height: 50px;
  flex: none;
  display: flex;
  align-items: center;
  padding: 1px 0 0 24px;
  border-bottom: 1px solid #c9c9c9;
  font-size: 16px;
  font-weight: 600;
  letter-spacing: -0.05px;
  color: #262626;
  gap: 18px;
`;

const ChatBody = styled.div`
  height: 366px;
  flex: none;
  display: flex;
  overflow: hidden;
`;

const MessageList = styled.div`
  width: 363px;
  margin-top: -4px;
`;

const Message = styled.div`
  min-height: 67px;
  display: grid;
  grid-template-columns: 42px 1fr auto;
  column-gap: 16px;
  padding: 0 26px 0 24px;
  line-height: 22px;
  font-size: 14px;
`;

const Avatar = styled.div`
  width: 42px;
  height: 42px;
  margin-top: 1px;
  border-radius: 50%;
  background: #f0f0f0;
  display: flex;
  justify-content: center;
  padding-top: 8px;
`;

const Sender = styled.div`
  color: #666;
  height: 24px;
`;

const Body = styled.div`
  color: #262626;
  white-space: pre;
  margin-right: -60px;
`;

const Time = styled.span`
  font-size: 10px;
  font-weight: 600;
  color: #666;
  line-height: 26px;
`;

const Scrollbar = styled.div`
  width: 17px;
  background: #f1f1f1;
  display: flex;
  flex-direction: column;
  align-items: center;
  padding: 7px 0 6px;
`;

const ScrollThumb = styled.div`
  width: 13px;
  height: 198px;
  margin: 121px 0 auto;
  background: #c1c1c1;
`;

const Composer = styled.div`
  height: 92px;
  flex: none;
  background: #f7f7f7;
  border-top: 1px solid #c9c9c9;
  border-bottom: 1px solid #c9c9c9;
  padding: 8px 8px 0;
`;

const Input = styled.div`
  height: 40px;
  border: 1px solid #c4c4c4;
  border-radius: 2px;
  background: #fff;
  padding-left: 9px;
  font-size: 14px;
  line-height: 38px;
  color: #6b6b6b;
`;

const FormatRow = styled.div`
  height: 42px;
  display: flex;
  align-items: center;
  padding: 0 23px 1px 8px;
`;

const FormatButton = styled.span`
  width: 40px;
`;

const Send = styled.span`
  margin-left: auto;
  font-size: 14px;
  font-weight: 700;
  letter-spacing: -0.1px;
  color: #7a7a7a;
`;

const PanelTabs = styled.div`
  height: 60px;
  display: flex;
  background: #f7f7f7;
`;

const PanelTab = styled.div<{ $active?: boolean }>`
  position: relative;
  width: 80px;
  flex: none;
  display: flex;
  align-items: center;
  justify-content: center;
  ${(p) =>
    p.$active &&
    css`
      width: 81px;
      margin-right: -1px;
      background: #fff;
      border-right: 1px solid #c9c9c9;
      box-shadow: inset 0 -4px 0 #a234b5;
    `}
`;

const CountBadge = styled.span`
  position: absolute;
  left: 40px;
  top: 37px;
  width: 25px;
  height: 14px;
  border-radius: 7px;
  background: #262626;
  color: #fff;
  font-size: 11px;
  font-weight: 700;
  line-height: 14px;
  text-align: center;
`;

const Grip = styled.span`
  position: absolute;
  left: 35px;
  top: 4px;
`;

const ClosePanel = styled.div`
  width: 53px;
  height: 43px;
  margin: 9px 0 0 auto;
  border-radius: 22px 0 0 22px;
  background: #c46dd5;
  display: flex;
  align-items: center;
  padding-left: 12px;
`;

const messages = [
  ["Yash Kundnani", "10:06 AM", "Good Morning Mam"],
  ["Yatin Jain", "10:07 AM", "good morning mam"],
  ["Rishika Bansal", "10:07 AM", "good morning mam"],
  ["Sridhar Avinash", "10:07 AM", "good morning mam"],
  ["Yash Kundnani", "10:14 AM", "Why Service is abstraction? developer\nknow why they are developing the\nservices."],
];

const gearPath = (() => {
  const pts: string[] = [];
  for (let i = 0; i < 8; i++) {
    const c = (i * Math.PI) / 4;
    const at = (a: number, r: number) => `${(13 + Math.sin(c + a) * r).toFixed(2)} ${(13 - Math.cos(c + a) * r).toFixed(2)}`;
    pts.push(`${i ? "L" : "M"}${at(-0.25, 9.6)}L${at(-0.17, 12)}L${at(0.17, 12)}L${at(0.25, 9.6)}Q${at(Math.PI / 8, 8)} ${at(Math.PI / 4 - 0.25, 9.6)}`);
  }
  return pts.join("") + "Z";
})();

const dark = { stroke: "#262626", strokeWidth: 1.2, strokeLinejoin: "round", strokeLinecap: "round" } as const;

const Chat = () => (
  <ChatPanel>
    <ChatHeader>
      <Svg w={8} h={17}>
        <path d="M7.500.8L1 8.500l6.500 7.700" stroke="#666" strokeWidth="1.200" />
      </Svg>
      Everyone
    </ChatHeader>
    <ChatBody>
      <MessageList>
        {messages.map(([name, time, text], i) => (
          <Message key={i}>
            <Avatar>
              <Person />
            </Avatar>
            <div>
              <Sender>{name}</Sender>
              <Body>{text}</Body>
            </div>
            <Time>{time}</Time>
          </Message>
        ))}
      </MessageList>
      <Scrollbar>
        <Svg w={8} h={5}>
          <path d="M.5 4.500h7L4 .5z" fill="#505050" />
        </Svg>
        <ScrollThumb />
        <Svg w={8} h={5}>
          <path d="M.5.500h7L4 4.500z" fill="#505050" />
        </Svg>
      </Scrollbar>
    </ChatBody>
    <Composer>
      <Input>Say something</Input>
      <FormatRow>
        <FormatButton>
          <Svg w={17} h={16}>
            <path d="M0 1h10a3.400 3.400 0 0 1 0 7H4M10 8h1.700a3.500 3.500 0 0 1 0 7H0M3.500 1v14" stroke="#262626" strokeWidth="1.900" />
          </Svg>
        </FormatButton>
        <FormatButton>
          <Svg w={16} h={16}>
            <path d="M5.500 1h7M3.500 15h7M9.500 1L7 15" stroke="#262626" strokeWidth="1.800" />
          </Svg>
        </FormatButton>
        <FormatButton>
          <Svg w={16} h={16}>
            <path d="M1.500 1h3M10.500 1h3M3 1v5.500a4.700 4.700 0 0 0 9.400 0V1M2 15h12" stroke="#262626" strokeWidth="1.800" />
          </Svg>
        </FormatButton>
        <FormatButton>
          <Svg w={17} h={16}>
            <path d="M10 1.200A7 7 0 1 0 15 7" stroke="#262626" strokeWidth="1.700" />
            <path d="M4.500 9.500h7a3.600 3.600 0 0 1-7 0zM13.500 0v6M10.500 3h6" stroke="#262626" strokeWidth="1.500" />
            <circle cx="5.500" cy="6" r="1" fill="#262626" />
            <circle cx="9.500" cy="6" r="1" fill="#262626" />
          </Svg>
        </FormatButton>
        <Send>Send</Send>
      </FormatRow>
    </Composer>
    <PanelTabs>
      <PanelTab $active>
        <Svg w={26} h={26}>
          <path d="M2.500 24.500l1.200-5.500a11.300 11 0 1 1 4.500 4.300z" stroke="#a234b5" strokeWidth="1.200" strokeLinejoin="round" />
          <path d="M13.500 5.500a7.500 7 0 0 1 7.500 7" stroke="#a234b5" strokeWidth="1.100" />
        </Svg>
      </PanelTab>
      <PanelTab>
        <Grip>
          <Svg w={10} h={6}>
            <path d="M0 .5h10M0 3h10M0 5.500h10" stroke="#555" strokeWidth=".9" />
          </Svg>
        </Grip>
        <Svg w={26} h={26}>
          <ellipse cx="8.500" cy="10.500" rx="4.600" ry="5.200" {...dark} />
          <path d="M6 15c-3 1-4.500 4-4.500 8.500h14c0-4-1-7.500-4.500-8.500" {...dark} />
          <ellipse cx="18.500" cy="5.500" rx="4" ry="4.600" {...dark} />
          <path d="M20.500 9.600c3 1 4.300 3.500 4.300 7.400h-9" {...dark} />
        </Svg>
        <CountBadge>52</CountBadge>
      </PanelTab>
      <PanelTab>
        <Svg w={26} h={24}>
          <path d="M12 2.500H4q-2 0-2 2v15q0 2 2 2h17q2 0 2-2V14" {...dark} />
          <path d="M8 16.500C8 9 12 6.500 24 6.500M19.500 2l5 4.500-5 4.500" {...dark} />
        </Svg>
      </PanelTab>
      <PanelTab>
        <Svg w={26} h={26}>
          <path d={gearPath} {...dark} />
          <circle cx="13" cy="13" r="4" {...dark} />
        </Svg>
      </PanelTab>
      <ClosePanel>
        <Svg w={20} h={20}>
          <path d="M1 1l18 18M19 1L1 19" stroke="#8f3aa1" strokeWidth="3.200" />
          <path d="M.8.8l18.400 18.400M19.200.8L.8 19.200" stroke="#fff" strokeWidth="1.700" />
        </Svg>
      </ClosePanel>
    </PanelTabs>
  </ChatPanel>
);

/* ---------- Downloads shelf ---------- */

const Shelf = styled.div`
  height: 56px;
  flex: none;
  display: flex;
  align-items: center;
  background: #fff;
`;

const Download = styled.div<{ $first?: boolean }>`
  width: ${(p) => (p.$first ? 237 : 233)}px;
  height: 44px;
  display: flex;
  align-items: center;
  padding: 0 18px 0 ${(p) => (p.$first ? 22 : 18)}px;
  border-right: 1px solid #cdcfd2;
  font-size: 13px;
  letter-spacing: -0.38px;
  color: #4a4d51;
  & > span {
    margin: 0 auto 0 15px;
  }
`;

const ShowAll = styled.div`
  width: 78px;
  height: 32px;
  margin: 0 13px 0 auto;
  border: 1px solid #dadce0;
  border-radius: 4px;
  color: #1a73e8;
  font-size: 12px;
  font-weight: 600;
  letter-spacing: -0.3px;
  line-height: 29px;
  text-align: center;
`;

const ShelfClose = styled.span`
  width: 23px;
`;

const DownloadItem = ({ first }: { first?: boolean }) => (
  <Download $first={first}>
    <Svg w={12} h={16}>
      <path d="M.5.500h8l3 3v12H.5z" fill="#fff" stroke="#8a8d91" />
      <path d="M8.500.500v3h3" stroke="#8a8d91" />
      <rect x="2.500" y="6" width="7" height="6" fill="#2689d8" />
      <path d="M2.500 12l3-3 4 3z" fill="#123f7c" />
    </Svg>
    <span>aboutus.jpg</span>
    <Svg w={10} h={7}>
      <path d="M1 6l4-4 4 4" stroke="#7b7e82" strokeWidth="1.800" />
    </Svg>
  </Download>
);

/* ---------- Taskbar ---------- */

const Taskbar = styled.div`
  height: 40px;
  flex: none;
  background: #1f282e;
  display: flex;
  color: #fff;
`;

const TaskButton = styled.div<{ $bg?: string; $bar?: string; $w?: number }>`
  width: ${(p) => p.$w ?? 48}px;
  margin-right: ${(p) => (p.$w ? 0 : 1)}px;
  display: flex;
  align-items: center;
  justify-content: center;
  background: ${(p) => p.$bg ?? "transparent"};
  box-shadow: ${(p) => (p.$bar ? `inset 0 -2px 0 ${p.$bar}` : "none")};
`;

const Tray = styled.div`
  margin-left: auto;
  display: flex;
  align-items: center;
`;

const TraySlot = styled.span<{ $w: number }>`
  width: ${(p) => p.$w}px;
  display: flex;
  justify-content: center;
`;

const Clock = styled.div`
  width: 66px;
  margin-right: 4px;
  font-size: 12px;
  line-height: 18px;
  letter-spacing: -0.45px;
  text-align: center;
`;

const Notifications = styled.div`
  position: relative;
  width: 44px;
  height: 40px;
  margin-right: 4px;
  border-right: 1px solid #626a6f;
  padding: 12px 0 0 7px;
`;

const NotificationCount = styled.span`
  position: absolute;
  left: 14px;
  top: 19px;
  width: 17px;
  height: 17px;
  border-radius: 50%;
  border: 1px solid #8a8f93;
  background: #363c41;
  font-size: 12px;
  line-height: 15px;
  text-align: center;
`;

const WindowsTaskbar = () => (
  <Taskbar>
    <TaskButton $w={48}>
      <Svg w={16} h={16}>
        <path d="M0 2.300l6.700-1v6.300H0zM7.500 1.200L16 0v7.600H7.500zM0 8.400h6.700v6.300l-6.700-1zM7.500 8.400H16V16l-8.500-1.200z" fill="#fff" />
      </Svg>
    </TaskButton>
    <TaskButton $w={48}>
      <Svg w={16} h={16}>
        <circle cx="10" cy="6" r="5.200" stroke="#fff" strokeWidth="1.200" />
        <path d="M6.300 9.700L.5 15.500" stroke="#fff" strokeWidth="1.200" />
      </Svg>
    </TaskButton>
    <TaskButton $w={48}>
      <Svg w={16} h={16}>
        <circle cx="8" cy="8" r="7" stroke="#f2f2f2" strokeWidth="2" />
      </Svg>
    </TaskButton>
    <TaskButton $w={48}>
      <Svg w={17} h={16}>
        <path d="M1.500 0v2.500h9V0M1.500 5.500h9v5.500h-9zM1.500 16v-2.500h9V16M14.500 0v2.500M14.500 8v8" stroke="#fff" strokeWidth="1.200" />
        <rect x="13.300" y="4" width="2.500" height="3" fill="#fff" />
      </Svg>
    </TaskButton>
    <TaskButton $w={52}>
      <Svg w={22} h={20} vb="-1 0 22 20">
        <path d="M0 1.500h8l2 2h11v15H0z" fill="#e8ab23" />
        <path d="M0 5h21v14H0z" fill="#fcd462" />
        <path d="M3.500 19v-7.500q0-1 1-1h12q1 0 1 1V19h-4v-4h-6v4z" fill="#4297dd" />
      </Svg>
    </TaskButton>
    <TaskButton>
      <Svg w={24} h={24}>
        <defs>
          <linearGradient id="edgeTop" x1="0" y1="0" x2="1" y2=".6">
            <stop offset="0" stopColor="#2fa4e6" />
            <stop offset=".6" stopColor="#36c5c4" />
            <stop offset="1" stopColor="#63d94f" />
          </linearGradient>
        </defs>
        <circle cx="12" cy="12" r="11.800" fill="#1677cf" />
        <path d="M.3 11C1 5 6 .2 12 .2c7 0 11.800 5 11.800 10.300 0 3.800-2.800 6-6 6-2.500 0-4-.8-3.300-2 1.500-2.500.5-5.500-3.500-6.500C7 7 2 8 .3 11z" fill="url(#edgeTop)" />
        <path d="M8.500 14c0-2.500 1.500-4.500 3.500-5 2.500.8 3.500 3.500 2.500 5.500-.7 1.200.8 2 3.300 2 2 0 3.700-.5 4.700-2-1 4-4 6-7.500 6.500-4 0-6.500-3.500-6.500-7z" fill="#1f282e" />
        <path d="M8.500 14c0 4 3 7 7 7 2 0 4-1 5.500-2.500C19 22 16 23.800 12 23.800c-5-1-7-7-3.500-12.500z" fill="#114f9c" />
      </Svg>
    </TaskButton>
    <TaskButton>
      <Svg w={24} h={24}>
        <path d="M6.500 6V1.500h10.500V6" stroke="#e8e8e8" strokeWidth="1.600" />
        <path d="M.5 6h22.500v17.500H.5z" fill="#f2f2f2" />
        <path d="M7.300 10.500h4v4h-4z" fill="#f25022" />
        <path d="M12.300 10.500h4v4h-4z" fill="#7fba00" />
        <path d="M7.300 15.500h4v4h-4z" fill="#00a4ef" />
        <path d="M12.300 15.500h4v4h-4z" fill="#ffb900" />
      </Svg>
    </TaskButton>
    <TaskButton>
      <Svg w={24} h={24}>
        <path d="M19.500 16.500A8 8 0 1 1 20 12.800H7" stroke="#5ec8f5" strokeWidth="4" />
        <path d="M3.500 23C-1 21.500 3 12 10 6S22.500.500 21.500 4.500" stroke="#f5c32c" strokeWidth="1.800" />
      </Svg>
    </TaskButton>
    <TaskButton>
      <Svg w={24} h={24}>
        <defs>
          <linearGradient id="fox" x1=".8" y1="0" x2=".3" y2="1">
            <stop offset="0" stopColor="#ffdf3a" />
            <stop offset=".5" stopColor="#ff8a1e" />
            <stop offset="1" stopColor="#f0264f" />
          </linearGradient>
        </defs>
        <path d="M1 12c0-4 .5-7 2.500-10L6 4.500l3-.5C10 4 13 3 15 .2c1 2.800 3 3.300 4.500 5.300L20.500 4c1.500 2.500 2.500 5 2.500 8.500A11 11 0 0 1 1 12.500z" fill="url(#fox)" />
        <circle cx="12.300" cy="12.800" r="5" fill="#7a3fd0" />
        <path d="M5 9.500c3-1.500 5 .5 8 1-1 2.500-4 2-5 3 1 3 5 4 8 1.500-1 5-10 5-11-2z" fill="#ff7a20" />
      </Svg>
    </TaskButton>
    <TaskButton $bg="#4d555b" $bar="#8ff0b5">
      <Svg w={22} h={22} vb="-11 -11 22 22">
        <circle r="10.800" fill="#fbc932" />
        <path d="M0-5L9.500-5A10.800 10.800 0 0 0-9.300-5.500L-4.300 2.500A5 5 0 0 1 0-5z" fill="#de4437" />
        <path d="M-9.300-5.500A10.800 10.800 0 0 0 -.2 10.800L4.500 2.500A5 5 0 0 1-4.300 2.500z" fill="#30a452" />
        <circle r="5.200" fill="#fff" />
        <circle r="4.100" fill="#4a84ee" />
      </Svg>
    </TaskButton>
    <TaskButton>
      <Svg w={24} h={22}>
        <path d="M0 8L12 0l12 8v13.500H0z" fill="#0f5aa8" />
        <path d="M3 8h18v10H3z" fill="#eef4fa" />
        <path d="M0 8l12 8 12-8v13.500H0z" fill="#2ea7e8" />
        <path d="M12 16l12-8v13.500z" fill="#47c0f5" />
      </Svg>
    </TaskButton>
    <TaskButton $bg="#a5622f" $bar="#ff7a0a">
      <Svg w={24} h={24}>
        <circle cx="12" cy="12" r="9" fill="#0c0c0c" />
        <FaSpotify size={24} color="#1ed45f" />
      </Svg>
    </TaskButton>
    <Tray>
      <TraySlot $w={24}>
        <Svg w={12} h={8}>
          <path d="M1 7l5-5 5 5" stroke="#fff" strokeWidth="1.300" />
        </Svg>
      </TraySlot>
      <TraySlot $w={25}>
        <Svg w={15} h={9}>
          <path d="M.5.500h12v8H.5zM14 3v3" stroke="#fff" />
          <rect x="2" y="2" width="5.500" height="5" fill="#fff" />
        </Svg>
      </TraySlot>
      <TraySlot $w={25}>
        <Svg w={13} h={13}>
          <path d="M4 12.500A8.500 8.500 0 0 1 12 4M7 12.500A5.500 5.500 0 0 1 12 7.200M1 12.500A11.500 11.500 0 0 1 12 1" stroke="#d5d8da" strokeWidth="1.200" />
          <circle cx="11" cy="11.500" r="1.600" fill="#fff" />
        </Svg>
      </TraySlot>
      <TraySlot $w={21}>
        <Svg w={17} h={14}>
          <path d="M1 5h2.500L7 1.500v11L3.500 9H1z" stroke="#fff" strokeWidth="1.100" />
          <path d="M9 4.500q1.800 2.500 0 5" stroke="#fff" strokeWidth="1.100" />
          <path d="M11.500 3q2.800 4 0 8M14 1.500q3.500 5.500 0 11" stroke="#7f868b" strokeWidth="1.100" />
        </Svg>
      </TraySlot>
      <TraySlot $w={32}>
        <Svg w={23} h={13}>
          <path d="M.5.500h22v12H.5z" stroke="#fff" />
          <path d="M3 3.500h17M3 6h17M3 8h17" stroke="#fff" strokeDasharray="1.200 1" />
          <path d="M6 10.300h11" stroke="#fff" />
        </Svg>
      </TraySlot>
      <Clock>
        10:29 AM
        <br />
        1/22/2021
      </Clock>
      <Notifications>
        <Svg w={16} h={15}>
          <path d="M0 0h16v12H8l-3.500 3v-3H0z" fill="#fff" />
          <path d="M3 3.500h10M3 6h10M3 8.500h7" stroke="#1f282e" />
        </Svg>
        <NotificationCount>2</NotificationCount>
      </Notifications>
    </Tray>
  </Taskbar>
);

export default function App() {
  return (
    <Screen>
      <GlobalStyle />
      <BrowserTabs />
      <AddressBar />
      <Bookmarks />
      <Session>
        <StageView />
        <Chat />
      </Session>
      <Shelf>
        <DownloadItem first />
        <DownloadItem />
        <ShowAll>Show all</ShowAll>
        <ShelfClose>
          <CloseX size={10} color="#65686c" />
        </ShelfClose>
      </Shelf>
      <WindowsTaskbar />
    </Screen>
  );
}
